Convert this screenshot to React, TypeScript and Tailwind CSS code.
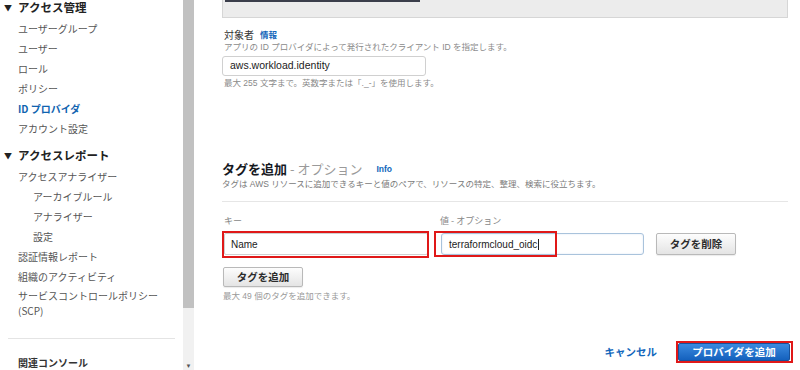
import React from 'react';

const jp = { fontFamily: '"Noto Sans CJK JP", "Liberation Sans", sans-serif' };
const mixed = { fontFamily: '"Liberation Sans", "Noto Sans CJK JP", sans-serif' };

function SideItem({ label, indent, active }: { label: string; indent?: boolean; active?: boolean }) {
  return (
    <div
      className={
        'h-[20px] flex items-center text-[10px] ' +
        (indent ? 'pl-[33px] ' : 'pl-[18px] ') +
        (active ? 'text-[#0f63b0] font-bold' : 'text-[#555]')
      }
    >
      {label}
    </div>
  );
}

function SideHeader({ label }: { label: string }) {
  return (
    <div className="h-[20px] flex items-center pl-[4px] text-[11.5px] font-bold text-[#222]">
      <span className="text-[8px] w-[14px]">▼</span>
      {label}
    </div>
  );
}

function Sidebar() {
  return (
    <aside className="w-[183px] shrink-0 bg-white" style={jp}>
      <div className="mt-[-2px]">
        <SideHeader label="アクセス管理" />
        <SideItem label="ユーザーグループ" />
        <SideItem label="ユーザー" />
        <SideItem label="ロール" />
        <SideItem label="ポリシー" />
        <SideItem label="ID プロバイダ" active />
        <SideItem label="アカウント設定" />
      </div>
      <div className="mt-[8px]">
        <SideHeader label="アクセスレポート" />
        <SideItem label="アクセスアナライザー" />
        <SideItem label="アーカイブルール" indent />
        <SideItem label="アナライザー" indent />
        <SideItem label="設定" indent />
        <SideItem label="認証情報レポート" />
        <SideItem label="組織のアクティビティ" />
        <div className="pl-[18px] pt-[2px] text-[10px] leading-[15px] text-[#555]">
          サービスコントロールポリシー
          <br />
          (SCP)
        </div>
      </div>
      <div className="mt-[20px] mx-[8px] border-t border-[#e4e4e4]" />
      <div className="mt-[16px] pl-[18px] text-[10px] font-semibold text-[#333]">関連コンソール</div>
    </aside>
  );
}

function Scrollbar() {
  return (
    <div className="w-[11px] shrink-0 bg-[#f1f1f1] flex flex-col">
      <div className="h-[308px] bg-[#c1c1c1]" />
      <div className="flex-1 flex items-end justify-center pb-[1px]">
        <span className="text-[6px] leading-[6px] text-[#555]">▼</span>
      </div>
    </div>
  );
}

function GreyButton({ children, w }: { children: React.ReactNode; w: string }) {
  return (
    <div
      className={
        w +
        ' h-full flex items-center justify-center rounded-[2px] border border-[#b9b9b9] bg-gradient-to-b from-[#fdfdfd] to-[#e4e4e4] text-[10.5px] font-bold text-[#2c2c2c] shadow-[0_1px_1px_rgba(0,0,0,0.08)]'
      }
      style={jp}
    >
      {children}
    </div>
  );
}

function Main() {
  return (
    <main className="flex-1 pl-[28px] pr-[12px] bg-white" style={jp}>
      <div className="h-[18px] border border-t-0 border-[#d6d6d6] bg-[#ececec]">
        <div className="ml-[2px] w-[195px] h-[2px] bg-[#3b3e4b]" />
      </div>

      <div className="mt-[9px] h-[14px] flex items-center gap-[6px] pl-[2px]">
        <span className="text-[10px] text-[#333]">対象者</span>
        <span className="text-[8.5px] font-bold text-[#1166bb]">情報</span>
      </div>
      <div className="h-[12px] leading-[12px] text-[8.5px] text-[#8a8a8a] pl-[2px]" style={mixed}>
        アプリの ID プロバイダによって発行されたクライアント ID を指定します。
      </div>
      <div
        className="mt-[3px] w-[204px] h-[20px] rounded-[3px] border border-[#d0d0d0] flex items-center pl-[7px] text-[10.5px] text-[#222]"
        style={mixed}
      >
        aws.workload.identity
      </div>
      <div className="mt-[1px] h-[12px] leading-[12px] text-[8.5px] text-[#8a8a8a] pl-[2px]" style={mixed}>
        最大 255 文字まで。英数字または「._-」を使用します。
      </div>

      <div className="mt-[71px] h-[18px] flex items-center">
        <span className="text-[13px] font-bold text-[#16191f]">タグを追加</span>
        <span className="text-[13px] text-[#9a9a9a] ml-[3px]">- オプション</span>
        <span className="text-[8.5px] font-bold text-[#1166bb] ml-[14px]" style={mixed}>
          Info
        </span>
      </div>
      <div className="h-[12px] leading-[12px] text-[8.5px] text-[#7a7a7a]" style={mixed}>
        タグは AWS リソースに追加できるキーと値のペアで、リソースの特定、整理、検索に役立ちます。
      </div>
      <div className="mt-[11px] border-t border-[#e6e6e6]" />

      <div className="mt-[12px] h-[12px] flex text-[9px] text-[#888]">
        <div className="w-[217px] pl-[2px]">キー</div>
        <div className="pl-[1px]">値 - オプション</div>
      </div>
      <div className="mt-[7px] h-[22px] flex">
        <div className="relative w-[217px]">
          <div
            className="ml-[2px] w-[204px] h-full border border-[#d0d0d0] rounded-[2px] flex items-center pl-[6px] text-[10px] text-[#222]"
            style={mixed}
          >
            Name
          </div>
          <div className="absolute left-0 top-[-2px] w-[207px] h-[27px] border-2 border-[#e01818]" />
        </div>
        <div className="relative w-[217px]">
          <div
            className="ml-[2px] w-[203px] h-full border border-[#a9c3dc] rounded-[3px] flex items-center pl-[7px] text-[10px] text-[#222] shadow-[inset_0_0_2px_rgba(60,120,200,0.2)]"
            style={mixed}
          >
            terraformcloud_oidc<span className="ml-[1px] w-px h-[11px] bg-[#222]" />
          </div>
          <div className="absolute left-[-5px] top-[-2px] w-[123px] h-[26px] border-2 border-[#e01818]" />
        </div>
        <GreyButton w="w-[80px]">タグを削除</GreyButton>
      </div>

      <div className="mt-[12px] h-[20px] flex pl-[1px]">
        <GreyButton w="w-[80px]">タグを追加</GreyButton>
      </div>
      <div className="mt-[3px] h-[12px] leading-[12px] text-[8.5px] text-[#999] pl-[1px]" style={mixed}>
        最大 49 個のタグを追加できます。
      </div>

      <div className="mt-[41px] h-[18px] flex justify-end items-center mr-[-2px]">
        <span className="text-[10.5px] font-bold text-[#1166bb] mr-[21px]">キャンセル</span>
        <div className="relative w-[112px] h-full">
          <div className="w-full h-full rounded-[2px] border border-[#18519a] bg-gradient-to-b from-[#3a8ae0] to-[#1461bd] flex items-center justify-center text-[10.5px] font-bold text-white">
            プロバイダを追加
          </div>
          <div className="absolute left-[-2px] top-[-2px] w-[117px] h-[22px] border-2 border-[#e01818]" />
        </div>
      </div>
    </main>
  );
}

export default function App() {
  return (
    <div className="w-[800px] h-[370px] overflow-hidden flex bg-white">
      <Sidebar />
      <Scrollbar />
      <Main />
    </div>
  );
}
